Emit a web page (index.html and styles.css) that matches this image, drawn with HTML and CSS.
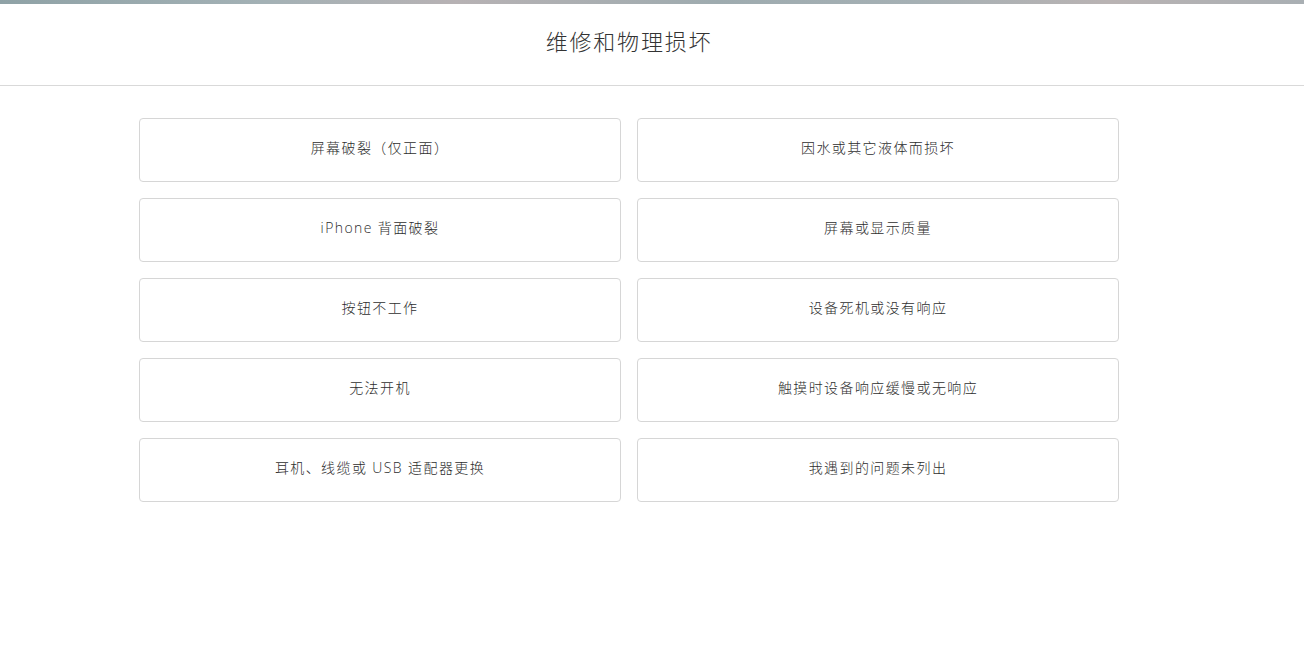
FILE: index.html
```html
<!DOCTYPE html>
<html lang="zh-CN">
<head>
<meta charset="utf-8">
<title>维修和物理损坏</title>
<link rel="stylesheet" href="styles.css">
</head>
<body>
<div class="topbar"></div>
<header class="header">
  <h1 class="title">维修和物理损坏</h1>
</header>
<main class="content">
  <div class="grid">
    <button class="option">屏幕破裂（仅正面）</button>
    <button class="option">因水或其它液体而损坏</button>
    <button class="option">iPhone 背面破裂</button>
    <button class="option">屏幕或显示质量</button>
    <button class="option">按钮不工作</button>
    <button class="option">设备死机或没有响应</button>
    <button class="option">无法开机</button>
    <button class="option">触摸时设备响应缓慢或无响应</button>
    <button class="option">耳机、线缆或 USB 适配器更换</button>
    <button class="option">我遇到的问题未列出</button>
  </div>
</main>
</body>
</html>
```
FILE: styles.css
```css
html, body {
  margin: 0;
  padding: 0;
  background: #fff;
}
body {
  font-family: "Open Sans", "Noto Sans CJK SC", sans-serif;
  color: #333;
}
.topbar {
  height: 4px;
  background: linear-gradient(90deg, #8fa2a6 0%, #a3b1b5 20%, #b7b2b4 35%, #9eabaf 55%, #a5b0b4 70%, #b9b3b3 85%, #a9afb3 100%);
}
.header {
  height: 81px;
  border-bottom: 1px solid #d9d9d9;
  display: flex;
  align-items: center;
  justify-content: center;
  padding-right: 46px;
}
.title {
  margin: 0;
  font-size: 22px;
  font-weight: 300;
  color: #333;
  letter-spacing: 1.8px;
  line-height: 1;
  padding-bottom: 8px;
}
.content {
  padding: 32px 46px 0 0;
  display: flex;
  justify-content: center;
}
.grid {
  width: 980px;
  display: grid;
  grid-template-columns: 482px 482px;
  column-gap: 16px;
  row-gap: 16px;
}
.option {
  height: 64px;
  border: 1px solid #d6d6d6;
  border-radius: 4px;
  background: #fff;
  font-family: "Open Sans", "Noto Sans CJK SC", sans-serif;
  font-size: 14px;
  font-weight: 300;
  color: #2e2e2e;
  letter-spacing: 1.4px;
  line-height: 20px;
  padding: 0 0 4px 0;
  cursor: pointer;
}
```
